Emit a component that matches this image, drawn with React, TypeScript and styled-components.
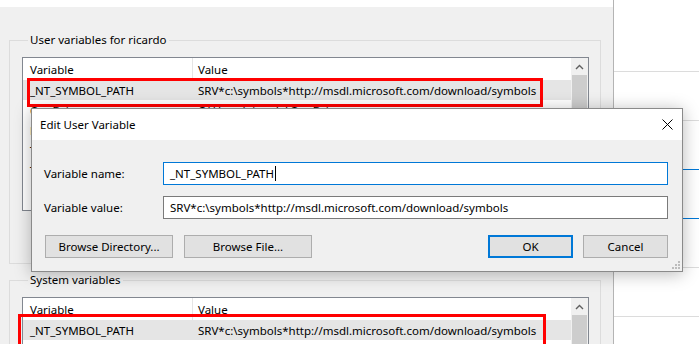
import React from 'react'
import styled, { createGlobalStyle } from 'styled-components'

const GlobalStyle = createGlobalStyle`
  html, body {
    margin: 0;
    padding: 0;
    height: 344px;
    overflow: hidden;
    background: #ffffff;
  }
  body {
    font-family: "Noto Sans", "DejaVu Sans", sans-serif;
    font-size: 11.5px;
    color: #000;
  }
`

const Page = styled.div`
  display: flex;
  flex-direction: row;
  width: 699px;
  height: 344px;
  position: relative;
  overflow: hidden;
`

const EnvWindow = styled.div`
  width: 613px;
  flex: none;
  display: flex;
  flex-direction: column;
  background: #f0f0f0;
  border-right: 1px solid #b4b4b4;
`

const TopStrip = styled.div`
  height: 7px;
  flex: none;
  background: #ffffff;
`

const Content = styled.div`
  flex: none;
  display: flex;
  flex-direction: column;
  padding: 25px 12px 0 9px;
`

const Group = styled.fieldset<{ $gap?: number }>`
  margin: ${p => p.$gap ?? 0}px 0 0 0;
  border: 1px solid #dcdcdc;
  padding: 9px 11px ${p => (p.$gap ? 0 : 52)}px 12px;
  min-width: 0;
`

const Legend = styled.legend`
  padding: 0 2px;
  margin-left: 6px;
  line-height: 16px;
  height: 16px;
`

const ListBox = styled.div`
  position: relative;
  display: flex;
  flex-direction: row;
  background: #ffffff;
  border: 1px solid #828790;
  height: 152px;
`

const Columns = styled.div`
  flex: 1;
  display: flex;
  flex-direction: column;
`

const HeaderRow = styled.div`
  display: grid;
  grid-template-columns: 169px 1fr;
  height: 22px;
  flex: none;
  align-items: center;
`

const HeaderCell = styled.div<{ $divider?: boolean }>`
  height: 100%;
  display: flex;
  align-items: center;
  padding-left: ${p => (p.$divider ? 5 : 7)}px;
  border-left: ${p => (p.$divider ? '1px solid #e5e5e5' : 'none')};
`

const Row = styled.div<{ $selected?: boolean }>`
  display: grid;
  grid-template-columns: 169px 1fr;
  height: 20px;
  flex: none;
  align-items: center;
  background: ${p => (p.$selected ? '#e5e5e5' : 'transparent')};
  white-space: nowrap;
`

const Cell = styled.div<{ $value?: boolean }>`
  padding-left: ${p => (p.$value ? 6 : 7)}px;
  overflow: hidden;
`

const ScrollBar = styled.div`
  width: 17px;
  flex: none;
  display: flex;
  flex-direction: column;
  background: #f0f0f0;
`

const ScrollArrow = styled.div`
  height: 17px;
  display: flex;
  align-items: center;
  justify-content: center;
`

const Thumb = styled.div`
  margin: 0 1px;
  height: 120px;
  background: #cdcdcd;
`

const Highlight = styled.div<{ $left: number; $top: number; $w: number; $h: number }>`
  position: absolute;
  left: ${p => p.$left}px;
  top: ${p => p.$top}px;
  width: ${p => p.$w}px;
  height: ${p => p.$h}px;
  box-sizing: border-box;
  border: 3px solid #ff0000;
  pointer-events: none;
`

const SidePane = styled.div`
  flex: 1;
  display: flex;
  flex-direction: column;
  padding-top: 23px;
  background: #ffffff;
`

const SideRow = styled.div<{ $accent?: boolean }>`
  height: 48px;
  flex: none;
  border-bottom: 1px solid ${p => (p.$accent ? '#0078d7' : '#dcdcdc')};
`

const Dialog = styled.div`
  position: absolute;
  left: 31px;
  top: 108px;
  width: 652px;
  height: 164px;
  box-sizing: border-box;
  border: 1px solid #8a8a8a;
  background: #f0f0f0;
  box-shadow: 0 2px 16px rgba(0, 0, 0, 0.28);
  display: flex;
  flex-direction: column;
`

const TitleBar = styled.div`
  height: 31px;
  flex: none;
  background: #ffffff;
  display: flex;
  align-items: center;
  justify-content: space-between;
  padding: 0 9px 0 8px;
`

const DialogBody = styled.div`
  flex: 1;
  display: flex;
  flex-direction: column;
  padding: 22px 14px 0 12px;
  position: relative;
`

const FieldRow = styled.div`
  display: grid;
  grid-template-columns: 119px 1fr;
  align-items: center;
  margin-bottom: 11px;
`

const TextBox = styled.div<{ $focused?: boolean }>`
  height: 23px;
  box-sizing: border-box;
  background: #ffffff;
  border: 1px solid ${p => (p.$focused ? '#0078d7' : '#7a7a7a')};
  display: flex;
  align-items: center;
  padding-left: 6px;
  white-space: nowrap;
`

const Caret = styled.span`
  display: inline-block;
  width: 1px;
  height: 15px;
  background: #000;
  margin-left: 1px;
`

const ButtonRow = styled.div`
  display: flex;
  flex-direction: row;
  margin-top: 5px;
  padding-left: 1px;
`

const Button = styled.div<{ $width: number; $default?: boolean; $gap?: number }>`
  width: ${p => p.$width}px;
  height: 23px;
  box-sizing: border-box;
  margin-left: ${p => p.$gap ?? 0}px;
  background: #e1e1e1;
  border: ${p => (p.$default ? '2px solid #0078d7' : '1px solid #adadad')};
  display: flex;
  align-items: center;
  justify-content: center;
`

const Spacer = styled.div`
  flex: 1;
`

const Grip = styled.svg`
  position: absolute;
  right: 2px;
  bottom: 2px;
`

const userRows = [
  ['OneDrive', 'C:\\Users\\ricardo\\OneDrive'],
  ['Path', 'C:\\Users\\ricardo\\AppData\\Local\\Microsoft\\WindowsApps;'],
  ['TEMP', 'C:\\Users\\ricardo\\AppData\\Local\\Temp'],
  ['TMP', 'C:\\Users\\ricardo\\AppData\\Local\\Temp'],
]

const SYMBOL_PATH = 'SRV*c:\\symbols*http://msdl.microsoft.com/download/symbols'

const UpChevron = () => (
  <svg width="9" height="6" viewBox="0 0 9 6">
    <path d="M1 5 L4.5 1.5 L8 5" fill="none" stroke="#606060" strokeWidth="1.4" />
  </svg>
)

const VarList = ({ rows, children }: { rows: string[][]; children?: React.ReactNode }) => (
  <ListBox>
    <Columns>
      <HeaderRow>
        <HeaderCell>Variable</HeaderCell>
        <HeaderCell $divider>Value</HeaderCell>
      </HeaderRow>
      <Row $selected>
        <Cell>_NT_SYMBOL_PATH</Cell>
        <Cell $value>{SYMBOL_PATH}</Cell>
      </Row>
      {rows.map(r => (
        <Row key={r[0]}>
          <Cell>{r[0]}</Cell>
          <Cell $value>{r[1]}</Cell>
        </Row>
      ))}
    </Columns>
    <ScrollBar>
      <ScrollArrow>
        <UpChevron />
      </ScrollArrow>
      <Thumb />
    </ScrollBar>
    {children}
  </ListBox>
)

export default function App() {
  return (
    <>
      <GlobalStyle />
      <Page>
        <EnvWindow>
          <TopStrip />
          <Content>
            <Group>
              <Legend>User variables for ricardo</Legend>
              <VarList rows={userRows}>
                <Highlight $left={4} $top={20} $w={516} $h={29} />
              </VarList>
            </Group>
            <Group $gap={8}>
              <Legend>System variables</Legend>
              <VarList rows={[['ComSpec', 'C:\\Windows\\system32\\cmd.exe']]}>
                <Highlight $left={-5} $top={16} $w={528} $h={60} />
              </VarList>
            </Group>
          </Content>
        </EnvWindow>
        <SidePane>
          <SideRow />
          <SideRow />
          <SideRow $accent />
          <SideRow $accent />
          <SideRow />
          <SideRow />
        </SidePane>

        <Dialog>
          <TitleBar>
            <span>Edit User Variable</span>
            <svg width="11" height="11" viewBox="0 0 11 11">
              <path d="M0.5 0.5 L10.5 10.5 M10.5 0.5 L0.5 10.5" stroke="#000" strokeWidth="1" />
            </svg>
          </TitleBar>
          <DialogBody>
            <FieldRow>
              <span>Variable name:</span>
              <TextBox $focused>
                _NT_SYMBOL_PATH<Caret />
              </TextBox>
            </FieldRow>
            <FieldRow>
              <span>Variable value:</span>
              <TextBox>{SYMBOL_PATH}</TextBox>
            </FieldRow>
            <ButtonRow>
              <Button $width={128}>Browse Directory...</Button>
              <Button $width={128} $gap={11}>Browse File...</Button>
              <Spacer />
              <Button $width={85} $default>OK</Button>
              <Button $width={85} $gap={10}>Cancel</Button>
            </ButtonRow>
            <Grip width="8" height="8" viewBox="0 0 8 8">
              <rect x="6" y="0" width="2" height="2" fill="#bcbcbc" />
              <rect x="3" y="3" width="2" height="2" fill="#bcbcbc" />
              <rect x="6" y="3" width="2" height="2" fill="#bcbcbc" />
              <rect x="0" y="6" width="2" height="2" fill="#bcbcbc" />
              <rect x="3" y="6" width="2" height="2" fill="#bcbcbc" />
              <rect x="6" y="6" width="2" height="2" fill="#bcbcbc" />
            </Grip>
          </DialogBody>
        </Dialog>
      </Page>
    </>
  )
}
